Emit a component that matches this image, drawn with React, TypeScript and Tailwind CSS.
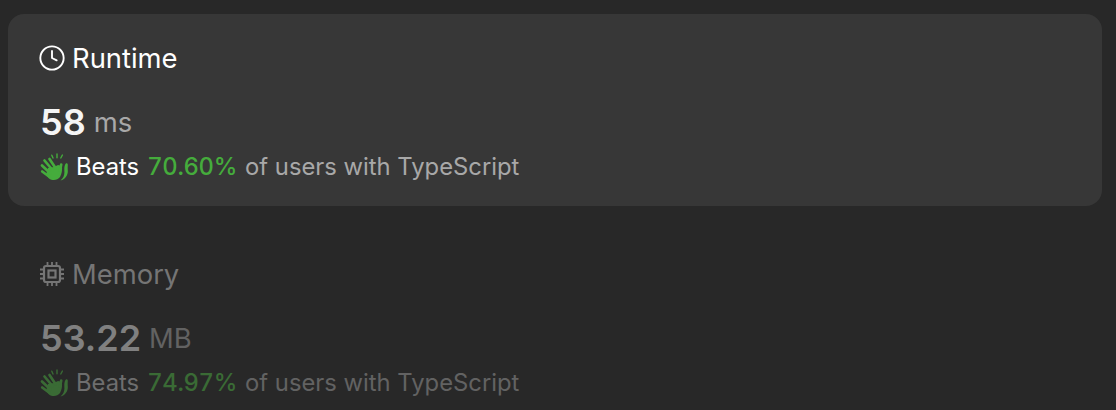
import React from "react";
import { Clock } from "lucide-react";

function Clap({ className }: { className?: string }) {
  return (
    <svg viewBox="0 0 28 28" className={className} fill="currentColor">
      <path d="M8 15l6-1 4-2 4 1c.3 4-.2 8-2 11-2.500 3.500-7.500 4-11 1.500L6 22z" />
      <g fill="none" stroke="currentColor" strokeWidth="2.700" strokeLinecap="round">
        <path d="M2.200 18.500l6.800 5" />
        <path d="M2 12.500l8.500 8" />
        <path d="M4.500 7.500l8 9.500" />
        <path d="M9.500 6l6 9" />
        <path d="M21.200 11.500l-1.200 6" />
      </g>
      <path d="M25.800 10.500c1.200-.5 2 .2 2 1.300-.1 2-.2 3.700 0 5.700.4 4.500-2.500 9-7.300 10 2.600-2.200 4-5 3.900-8.400-.1-3-.4-6.300 1.400-8.600z" />
      <g fill="none" stroke="currentColor" strokeWidth="1.400" strokeLinecap="round">
        <path d="M11.800 2.200l1.200 2.800" />
        <path d="M17 1v3.800" />
        <path d="M22.400 2l-1.600 3" />
      </g>
    </svg>
  );
}

function Chip({ className }: { className?: string }) {
  return (
    <svg viewBox="0 0 24 24" className={className} fill="none" stroke="currentColor" strokeWidth="2.200">
      <rect x="4" y="4" width="16" height="16" rx="2" />
      <rect x="8.500" y="8.500" width="7" height="7" />
      <path strokeWidth="1.800" d="M7.500 0v3M12 0v3M16.500 0v3M7.500 21v3M12 21v3M16.500 21v3M0 7.500h3M0 12h3M0 16.500h3M21 7.500h3M21 12h3M21 16.500h3" />
    </svg>
  );
}

function Stat({
  icon,
  title,
  value,
  unit,
  beats,
  active,
}: {
  icon: React.ReactNode;
  title: string;
  value: string;
  unit: string;
  beats: string;
  active?: boolean;
}) {
  return (
    <div className={active ? "rounded-2xl bg-[#373737] h-[192px] px-8 pt-[26px]" : "h-[192px] px-8 pt-[26px]"}>
      <div className={active ? "flex items-center gap-2 h-9 text-white" : "flex items-center gap-2 h-9 text-[#757575]"}>
        {icon}
        <span className="text-[27.400px] leading-9">{title}</span>
      </div>
      <div className="flex items-center gap-2 mt-[28px] h-9">
        <span className={active ? "text-[36px] leading-9 font-semibold text-[#f5f5f5]" : "text-[36px] leading-9 font-semibold text-[#808080]"}>{value}</span>
        <span className={active ? "text-[27.400px] leading-9 text-[#a8a8a8]" : "text-[27.400px] leading-9 text-[#626262]"}>{unit}</span>
      </div>
      <div className="flex items-center mt-[11px] h-8 text-[23.800px]">
        <Clap className={active ? "w-7 h-7 text-[#45ac3c]" : "w-7 h-7 text-[#3a6b35]"} />
        <span className={active ? "text-white ml-2" : "text-[#6e6e6e] ml-2"}>Beats</span>
        <span className={active ? "text-[#45ac3c] font-medium tabular-nums tracking-[-0.3px] ml-2" : "text-[#3a6b35] font-medium tabular-nums tracking-[-0.3px] ml-2"}>{beats}</span>
        <span className={active ? "text-[#a8a8a8] ml-2" : "text-[#626262] ml-2"}>of users with TypeScript</span>
      </div>
    </div>
  );
}

export default function App() {
  return (
    <div className="w-[1116px] h-[410px] overflow-hidden bg-[#282828] pl-2 pr-[14px] pt-[14px] font-['Inter',sans-serif]">
      <Stat
        active
        icon={<Clock className="w-7 h-7 -mx-0.5" strokeWidth={1.600} />}
        title="Runtime"
        value="58"
        unit="ms"
        beats="70.60%"
      />
      <div className="mt-[24px]">
        <Stat
          icon={<Chip className="w-6 h-6" />}
          title="Memory"
          value="53.22"
          unit="MB"
          beats="74.97%"
        />
      </div>
    </div>
  );
}
